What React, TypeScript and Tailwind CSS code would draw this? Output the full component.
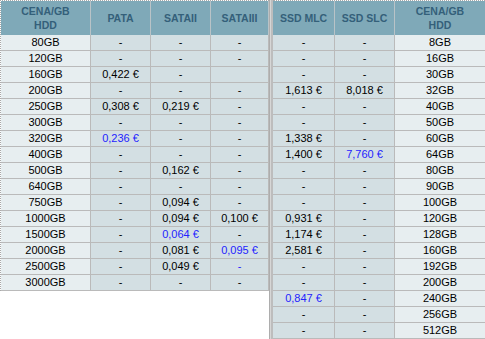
const hddRows: [string, string, string, string][] = [
  ["80GB", "-", "-", "-"],
  ["120GB", "-", "-", "-"],
  ["160GB", "0,422 €", "-", ""],
  ["200GB", "-", "-", "-"],
  ["250GB", "0,308 €", "0,219 €", "-"],
  ["300GB", "-", "-", "-"],
  ["320GB", "*0,236 €", "-", "-"],
  ["400GB", "-", "-", "-"],
  ["500GB", "-", "0,162 €", "-"],
  ["640GB", "-", "-", "-"],
  ["750GB", "-", "0,094 €", "-"],
  ["1000GB", "-", "0,094 €", "0,100 €"],
  ["1500GB", "-", "*0,064 €", "-"],
  ["2000GB", "-", "0,081 €", "*0,095 €"],
  ["2500GB", "-", "0,049 €", "*-"],
  ["3000GB", "-", "-", "-"],
];

const ssdRows: [string, string, string][] = [
  ["-", "-", "8GB"],
  ["-", "-", "16GB"],
  ["-", "-", "30GB"],
  ["1,613 €", "8,018 €", "32GB"],
  ["-", "-", "40GB"],
  ["-", "-", "50GB"],
  ["1,338 €", "-", "60GB"],
  ["1,400 €", "*7,760 €", "64GB"],
  ["-", "-", "80GB"],
  ["-", "-", "90GB"],
  ["-", "-", "100GB"],
  ["0,931 €", "-", "120GB"],
  ["1,174 €", "-", "128GB"],
  ["2,581 €", "-", "160GB"],
  ["-", "-", "192GB"],
  ["-", "-", "200GB"],
  ["*0,847 €", "-", "240GB"],
  ["-", "-", "256GB"],
  ["-", "-", "512GB"],
];

function Value({ v }: { v: string }) {
  if (v.startsWith("*")) return <span className="text-[#2323ff]">{v.slice(1)}</span>;
  return <span>{v}</span>;
}

function Head({ w, children, last }: { w: string; children: React.ReactNode; last?: boolean }) {
  return (
    <div
      className={`${w} h-[34px] flex items-center justify-center text-center font-bold text-[10.5px] leading-[14px] text-[#34607a] ${
        last ? "" : "border-r border-[#b9c3c7]"
      }`}
    >
      {children}
    </div>
  );
}

function Cell({ w, light, last, v }: { w: string; light?: boolean; last?: boolean; v: string }) {
  return (
    <div
      className={`${w} h-[16px] flex items-center justify-center border-b border-[#bababa] text-[11px] leading-none text-black ${
        light ? "bg-[#e7eef0]" : "bg-[#d3dfe3]"
      } ${last ? "" : "border-r"}`}
    >
      <Value v={v} />
    </div>
  );
}

export default function App() {
  return (
    <div className="flex items-start w-[485px] h-[339px] bg-white font-['Liberation_Sans',Arial,sans-serif]">
      {/* HDD table */}
      <div className="w-[269px] border-t border-l border-dotted border-[#a8a8a8]">
        <div className="flex bg-[#7fa9b8]">
          <Head w="w-[90px]">CENA/GB<br />HDD</Head>
          <Head w="w-[60px]">PATA</Head>
          <Head w="w-[60px]">SATAII</Head>
          <Head w="w-[58px]">SATAIII</Head>
        </div>
        {hddRows.map((r) => (
          <div key={r[0]} className="flex">
            <Cell w="w-[90px]" light v={r[0]} />
            <Cell w="w-[60px]" v={r[1]} />
            <Cell w="w-[60px]" v={r[2]} />
            <Cell w="w-[58px]" v={r[3]} />
          </div>
        ))}
      </div>

      {/* divider */}
      <div className="flex h-[339px] w-[4px]">
        <div className="w-px bg-[#adadad]" />
        <div className="w-px bg-[#d6d6d6]" />
        <div className="w-[2px] bg-[#bdbdbd]" />
      </div>

      {/* SSD table */}
      <div className="w-[212px] border-t border-dotted border-[#a8a8a8]">
        <div className="flex bg-[#7fa9b8]">
          <Head w="w-[62px]">SSD MLC</Head>
          <Head w="w-[60px]">SSD SLC</Head>
          <Head w="w-[90px]" last>CENA/GB<br />HDD</Head>
        </div>
        {ssdRows.map((r) => (
          <div key={r[2]} className="flex">
            <Cell w="w-[62px]" v={r[0]} />
            <Cell w="w-[60px]" v={r[1]} />
            <Cell w="w-[90px]" light last v={r[2]} />
          </div>
        ))}
      </div>
    </div>
  );
}
